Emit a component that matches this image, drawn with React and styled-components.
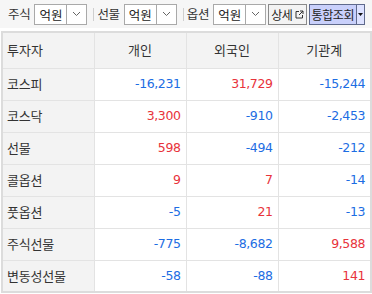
import React from "react";
import styled, { createGlobalStyle } from "styled-components";

const Global = createGlobalStyle`
  html, body { margin: 0; padding: 0; background: #fff; }
  body { font-family: "Noto Sans CJK KR", "Noto Sans", sans-serif; color: #333; }
`;

const Page = styled.div`
  width: 372px;
  height: 294px;
  overflow: hidden;
`;

const Toolbar = styled.div`
  height: 28px;
  background: #f6f6f6;
  display: flex;
  align-items: center;
  padding-left: 8px;
  box-sizing: border-box;
`;

const Label = styled.span`
  font-size: 12.5px;
  line-height: 1;
  color: #333;
  margin-right: 4px;
  letter-spacing: -0.3px;
`;

const Select = styled.div`
  display: flex;
  height: 21px;
  box-sizing: border-box;
  border: 1px solid #a9a9a9;
  background: #fff;
`;

const SelectValue = styled.span`
  width: 31px;
  display: flex;
  align-items: center;
  justify-content: center;
  font-size: 12.5px;
  color: #222;
  border-right: 1px solid #a9a9a9;
`;

const SelectArrow = styled.span`
  width: 19px;
  display: flex;
  align-items: center;
  justify-content: center;
`;

const Sep = styled.span`
  width: 1px;
  height: 13px;
  background: #cfcfcf;
  margin: 0 3px 0 6px;
`;

const Btn = styled.div`
  display: flex;
  align-items: center;
  height: 21px;
  box-sizing: border-box;
  border: 1px solid ${(p) => (p.$primary ? "#5f6a8c" : "#8a8a8a")};
  background: ${(p) => (p.$primary ? "#c9d0fb" : "#f3f3f3")};
  font-size: 12px;
  letter-spacing: -0.4px;
  color: #222;
  margin-left: ${(p) => p.$ml || 0}px;
  padding: 0 0 0 2px;
`;

const BtnDrop = styled.span`
  width: 7px;
  height: 100%;
  margin-left: 2px;
  border-left: 1px solid #5f6a8c;
  display: flex;
  align-items: center;
  justify-content: center;
  background: #dde2ff;
`;

const Table = styled.table`
  margin: 3px 0 0 1px;
  width: 369px;
  border-collapse: collapse;
  table-layout: fixed;
  border: 2px solid #dcdcdc;
  line-height: 16px;
`;

const HeadRow = styled.tr`
  height: 36px;
`;

const Row = styled.tr`
  height: 32px;
`;

const Th = styled.th`
  background: #f3f3f3;
  font-weight: normal;
  font-size: 13px;
  color: #333;
  border: 1px solid #e3e3e3;
  text-align: ${(p) => (p.$left ? "left" : "center")};
  padding: 0 ${(p) => (p.$left ? "4px" : "0")};
`;

const RowHead = styled.td`
  background: #f3f3f3;
  font-size: 13px;
  color: #333;
  border: 1px solid #e3e3e3;
  padding: 0 4px;
  letter-spacing: -0.2px;
`;

const Num = styled.td`
  text-align: right;
  padding: 0 5px 0 0;
  font-size: 12.5px;
  border: 1px solid #e3e3e3;
  color: ${(p) => (p.$v < 0 ? "#1d6de3" : "#e8333b")};
  font-family: "DejaVu Sans", "Noto Sans", sans-serif;
  letter-spacing: -0.4px;
`;

const Chevron = () => (
  <svg width="9" height="6" viewBox="0 0 9 6">
    <path d="M1 1 L4.5 4.5 L8 1" fill="none" stroke="#666" strokeWidth="1" />
  </svg>
);

const ExtIcon = () => (
  <svg width="9" height="9" viewBox="0 0 9 9" style={{ marginLeft: 2, marginRight: 2 }}>
    <path d="M1 1.5 H4 M1 1.5 V8 H7.5 V5" fill="none" stroke="#333" strokeWidth="1" />
    <path d="M5 1 H8 V4 M8 1 L4 5" fill="none" stroke="#333" strokeWidth="1" />
  </svg>
);

const Tri = () => (
  <svg width="5" height="3" viewBox="0 0 5 3">
    <path d="M0 0 H5 L2.5 3 Z" fill="#111" />
  </svg>
);

const rows = [
  ["코스피", -16231, 31729, -15244],
  ["코스닥", 3300, -910, -2453],
  ["선물", 598, -494, -212],
  ["콜옵션", 9, 7, -14],
  ["풋옵션", -5, 21, -13],
  ["주식선물", -775, -8682, 9588],
  ["변동성선물", -58, -88, 141],
];

const fmt = (n) => n.toLocaleString("en-US");

const Sel = () => (
  <Select>
    <SelectValue>억원</SelectValue>
    <SelectArrow>
      <Chevron />
    </SelectArrow>
  </Select>
);

export default function App() {
  return (
    <Page>
      <Global />
      <Toolbar>
        <Label>주식</Label>
        <Sel />
        <Sep />
        <Label>선물</Label>
        <Sel />
        <Sep />
        <Label>옵션</Label>
        <Sel />
        <Btn $ml={2}>
          상세
          <ExtIcon />
        </Btn>
        <Btn $primary $ml={2}>
          통합조회
          <BtnDrop>
            <Tri />
          </BtnDrop>
        </Btn>
      </Toolbar>
      <Table>
        <colgroup>
          <col style={{ width: 92 }} />
          <col style={{ width: 92 }} />
          <col style={{ width: 92 }} />
          <col style={{ width: 93 }} />
        </colgroup>
        <thead>
          <HeadRow>
            <Th $left>투자자</Th>
            <Th>개인</Th>
            <Th>외국인</Th>
            <Th>기관계</Th>
          </HeadRow>
        </thead>
        <tbody>
          {rows.map(([name, a, b, c]) => (
            <Row key={name}>
              <RowHead>{name}</RowHead>
              <Num $v={a}>{fmt(a)}</Num>
              <Num $v={b}>{fmt(b)}</Num>
              <Num $v={c}>{fmt(c)}</Num>
            </Row>
          ))}
        </tbody>
      </Table>
    </Page>
  );
}
